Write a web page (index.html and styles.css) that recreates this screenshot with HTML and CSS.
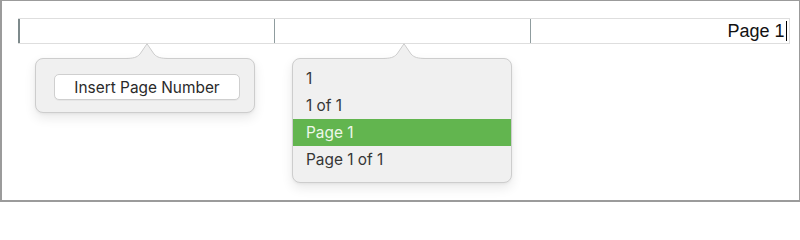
FILE: index.html
```html
<!DOCTYPE html>
<html>
<head>
<meta charset="utf-8">
<link rel="stylesheet" href="styles.css">
</head>
<body>
<div class="page">
  <div class="field">
    <div class="cell"></div>
    <div class="cell"></div>
    <div class="cell right"><span class="hdr-text">Page 1</span><span class="caret"></span></div>
  </div>

  <div class="popover pop1">
    <svg class="notch" width="44" height="18" viewBox="0 0 44 18"><rect x="3" y="15" width="38" height="3" fill="#f0f0f0"/><path d="M0 15.5 C8 15.5 12 14.5 15 11 L22 0.8 L29 11 C32 14.5 36 15.5 44 15.5" fill="#f0f0f0" stroke="#cdcdcd" stroke-width="1"/></svg>
    <button class="btn">Insert Page Number</button>
  </div>

  <div class="popover pop2">
    <svg class="notch" width="44" height="18" viewBox="0 0 44 18"><rect x="3" y="15" width="38" height="3" fill="#f0f0f0"/><path d="M0 15.5 C8 15.5 12 14.5 15 11 L22 0.8 L29 11 C32 14.5 36 15.5 44 15.5" fill="#f0f0f0" stroke="#cdcdcd" stroke-width="1"/></svg>
    <ul class="menu">
      <li>1</li>
      <li>1 of 1</li>
      <li class="sel">Page 1</li>
      <li>Page 1 of 1</li>
    </ul>
  </div>
</div>
</body>
</html>
```

FILE: styles.css
```css
html, body { margin: 0; padding: 0; background: #fff; }
.page {
  position: relative;
  width: 800px;
  height: 202px;
  box-sizing: border-box;
  border: 1px solid #9b9b9b;
  border-left-width: 2px;
  border-bottom-width: 2px;
  padding: 17px 0 0 16px;
  font-family: Inter, "Liberation Sans", sans-serif;
}
.field {
  display: grid;
  grid-template-columns: 256px 256px 259px;
  height: 24px;
  border-top: 1px solid #dedede;
  border-bottom: 1px solid #dedede;
  border-right: 1px solid #dedede;
  width: 771px;
  box-sizing: content-box;
}
.cell {
  border-left: 1px solid #8f9c9e;
  display: flex;
  align-items: center;
  justify-content: flex-end;
}
.cell:first-child { border-left: 2px solid #7e8a8c; }
.hdr-text {
  font-family: "Liberation Sans", Arial, sans-serif;
  font-size: 18px;
  color: #111;
  line-height: 22px;
}
.caret {
  width: 1.5px;
  height: 20px;
  background: #000;
  margin-left: 1px;
  margin-right: 2px;
}
.popover {
  position: absolute;
  top: 57px;
  width: 220px;
  box-sizing: border-box;
  background: #f0f0f0;
  border: 1px solid #cdcdcd;
  border-radius: 8px;
  box-shadow: 0 5px 12px rgba(0,0,0,0.09), 0 1px 3px rgba(0,0,0,0.05);
}
.notch {
  position: absolute;
  top: -16px;
  display: block;
}
.pop1 { left: 33px; height: 55px; }
.pop1 .notch { left: 89px; }
.pop2 { left: 290px; height: 125px; }
.pop2 .notch { left: 89px; }
.btn {
  display: block;
  margin: 15px 0 0 18px;
  width: 186px;
  height: 26px;
  box-sizing: border-box;
  background: #fff;
  border: 1px solid #cfcfcf;
  border-radius: 5px;
  font-family: Inter, "Liberation Sans", sans-serif;
  font-size: 15.4px;
  color: #2a2a2a;
  padding: 0;
  box-shadow: 0 1px 0 rgba(0,0,0,0.04);
}
.menu {
  list-style: none;
  margin: 0;
  padding: 6px 0 0 0;
}
.menu li {
  height: 27px;
  line-height: 27px;
  padding-left: 13px;
  font-size: 15.4px;
  color: #363636;
}
.menu li.sel {
  background: #62b54f;
  color: #eef7ea;
}
```
